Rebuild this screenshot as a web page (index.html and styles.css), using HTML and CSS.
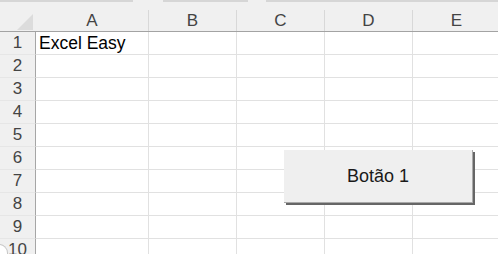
FILE: index.html
```html
<!DOCTYPE html>
<html lang="pt">

<head>
  <meta charset="UTF-8">
  <meta name="viewport" content="width=device-width, initial-scale=1.0">
  <title>Excel Easy</title>

  <link rel="stylesheet" href="styles.css">
</head>

<body>
  <div class="sheet">
    <!-- faixa superior -->
    <div class="top-strip">
      <span class="seg seg-1"></span>
      <span class="seg seg-2"></span>
      <span class="seg seg-3"></span>
    </div>

    <!-- cabeçalho das colunas -->
    <div class="col-head">
      <div class="corner">
        <svg width="16" height="16" viewBox="0 0 16 16"><polygon points="16,0 16,16 0,16" fill="#dcdcdc" /></svg>
      </div>
      <div class="col-name w-a">A</div>
      <div class="col-name w-n">B</div>
      <div class="col-name w-n">C</div>
      <div class="col-name w-n">D</div>
      <div class="col-name w-n">E</div>
    </div>

    <div class="grid" id="grid"></div>

    <div class="tab-corner"></div>

    <button class="form-btn">Botão 1</button>
  </div>

  <script>
    // monta as linhas da planilha
    const grid = document.getElementById('grid');
    const data = { 1: { A: 'Excel Easy' } };
    const cols = ['A', 'B', 'C', 'D', 'E'];

    for (let r = 1; r <= 10; r++) {
      const num = document.createElement('div');
      num.className = 'row-num';
      num.textContent = r;
      grid.appendChild(num);

      cols.forEach(c => {
        const cell = document.createElement('div');
        cell.className = 'cell';
        cell.textContent = (data[r] && data[r][c]) || '';
        grid.appendChild(cell);
      });
    }
  </script>
</body>

</html>
```

FILE: styles.css
```css
/* base */
body {
  margin: 0;
  overflow: hidden;
  background: #ffffff;
  font-family: "Liberation Sans", Arial, sans-serif;
}

.sheet {
  position: relative;
  width: 501px;
  height: 254px;
  overflow: hidden;
}

/* faixa superior */
.top-strip {
  display: flex;
  height: 2px;
  background: #f0f0f0;
}

.seg {
  height: 2px;
  background: #d6d6d6;
}

.seg-1 {
  width: 133px;
}

.seg-2 {
  width: 85px;
  margin-left: 30px;
}

.seg-3 {
  width: 235px;
  margin-left: 18px;
}

/* cabeçalho das colunas */
.col-head {
  display: flex;
  align-items: flex-end;
  height: 29px;
  background: #f0f0f0;
  border-bottom: 1px solid #a3a3a3;
}

.corner {
  box-sizing: border-box;
  width: 36px;
  height: 29px;
  display: flex;
  align-items: flex-end;
  justify-content: flex-end;
  padding: 0 3px 1px 0;
}

.corner svg {
  display: block;
}

.col-name {
  box-sizing: border-box;
  height: 21px;
  padding-top: 2px;
  line-height: 18px;
  font-size: 17px;
  color: #444444;
  text-align: center;
  border-right: 1px solid #d8d8d8;
}

.w-a {
  width: 113px;
}

.w-n {
  width: 88px;
}

/* grade */
.grid {
  display: grid;
  grid-template-columns: 36px 113px 88px 88px 88px 88px;
  grid-auto-rows: 23px;
}

.row-num,
.cell {
  box-sizing: border-box;
  line-height: 22px;
  font-size: 17px;
  white-space: nowrap;
}

.row-num {
  background: #f0f0f0;
  color: #444444;
  text-align: center;
  border-right: 1px solid #a6a6a6;
  border-bottom: 1px solid #e6e6e6;
}

.cell {
  color: #000000;
  padding-left: 3px;
  font-size: 17.5px;
  border-right: 1px solid #e1e1e1;
  border-bottom: 1px solid #e1e1e1;
}

/* canto inferior (abas) */
.tab-corner {
  position: absolute;
  left: -2px;
  top: 244px;
  width: 9px;
  height: 20px;
  background: #ffffff;
  border-top: 1px solid #c6c6c6;
  border-right: 1px solid #c6c6c6;
  border-top-right-radius: 9px;
}

/* botão de formulário */
.form-btn {
  position: absolute;
  left: 284px;
  top: 150px;
  width: 189px;
  height: 53px;
  margin: 0;
  padding: 0;
  background: #efefef;
  border: none;
  border-right: 1px solid #a9a9a9;
  border-bottom: 1px solid #a9a9a9;
  box-shadow: 2px 2px 0 #666666;
  font-family: "Liberation Sans", Arial, sans-serif;
  font-size: 18px;
  color: #1a1a1a;
}
```
